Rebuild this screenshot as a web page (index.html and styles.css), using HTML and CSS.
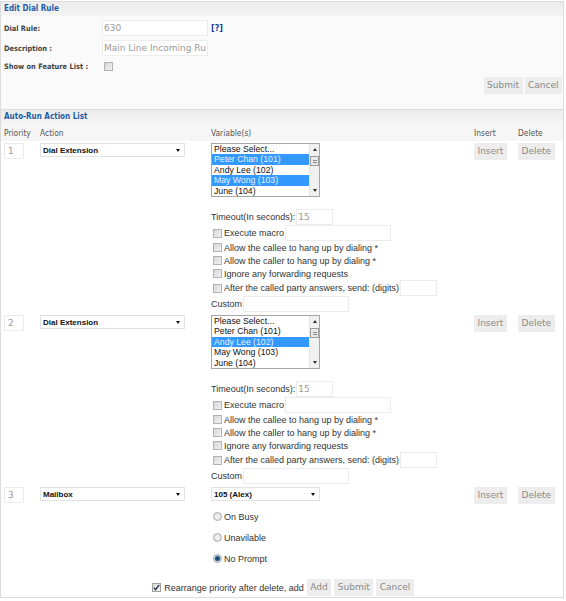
FILE: index.html
```html
<!DOCTYPE html>
<html>
<head>
<meta charset="utf-8">
<title>Edit Dial Rule</title>
<link rel="stylesheet" href="styles.css">
</head>
<body>
<div class="page">
  <section class="panel rule">
    <h2 class="ph">Edit Dial Rule</h2>
    <div class="rule-body">
      <div class="frow"><span class="lbl">Dial Rule:</span><input class="tin w106" type="text" value="630"><a class="help">[?]</a></div>
      <div class="frow"><span class="lbl">Description :</span><input class="tin w106" type="text" value="Main Line Incoming Ru"></div>
      <div class="frow short"><span class="lbl">Show on Feature List :</span><span class="cb"></span></div>
      <div class="btnbar"><button class="btn">Submit</button><button class="btn">Cancel</button></div>
    </div>
  </section>

  <section class="panel list">
    <h2 class="ph">Auto-Run Action List</h2>
    <div class="cols colhead"><span>Priority</span><span>Action</span><span>Variable(s)</span><span>Insert</span><span>Delete</span></div>

    <div class="cols arow first">
      <input class="tin pri" type="text" value="1">
      <div class="selbox w144"><span>Dial Extension</span><i class="arrow"></i></div>
      <div class="var">
        <div class="lb">
          <ul class="lb-items">
            <li>Please Select...</li>
            <li class="on">Peter Chan (101)</li>
            <li>Andy Lee (102)</li>
            <li class="on">May Wong (103)</li>
            <li>June (104)</li>
          </ul>
          <div class="sb"><span class="sb-up"><i></i></span><span class="sb-thumb"></span><span class="sb-fill"></span><span class="sb-dn"><i></i></span></div>
        </div>
        <div class="opts">
          <div class="oline tall">Timeout(In seconds):<input class="tin w37" type="text" value="15"></div>
          <div class="oline tall"><span class="cb"></span>Execute macro<input class="tin w106" type="text"></div>
          <div class="oline"><span class="cb"></span>Allow the callee to hang up by dialing *</div>
          <div class="oline"><span class="cb"></span>Allow the caller to hang up by dialing *</div>
          <div class="oline"><span class="cb"></span>Ignore any forwarding requests</div>
          <div class="oline tall"><span class="cb"></span>After the called party answers, send: (digits)<input class="tin w37" type="text"></div>
          <div class="oline tall">Custom<input class="tin w106" type="text"></div>
        </div>
      </div>
      <button class="btn">Insert</button>
      <button class="btn">Delete</button>
    </div>

    <div class="cols arow">
      <input class="tin pri" type="text" value="2">
      <div class="selbox w144"><span>Dial Extension</span><i class="arrow"></i></div>
      <div class="var">
        <div class="lb">
          <ul class="lb-items">
            <li>Please Select...</li>
            <li>Peter Chan (101)</li>
            <li class="on">Andy Lee (102)</li>
            <li>May Wong (103)</li>
            <li>June (104)</li>
          </ul>
          <div class="sb"><span class="sb-up"><i></i></span><span class="sb-thumb"></span><span class="sb-fill"></span><span class="sb-dn"><i></i></span></div>
        </div>
        <div class="opts">
          <div class="oline tall">Timeout(In seconds):<input class="tin w37" type="text" value="15"></div>
          <div class="oline tall"><span class="cb"></span>Execute macro<input class="tin w106" type="text"></div>
          <div class="oline"><span class="cb"></span>Allow the callee to hang up by dialing *</div>
          <div class="oline"><span class="cb"></span>Allow the caller to hang up by dialing *</div>
          <div class="oline"><span class="cb"></span>Ignore any forwarding requests</div>
          <div class="oline tall"><span class="cb"></span>After the called party answers, send: (digits)<input class="tin w37" type="text"></div>
          <div class="oline tall">Custom<input class="tin w106" type="text"></div>
        </div>
      </div>
      <button class="btn">Insert</button>
      <button class="btn">Delete</button>
    </div>

    <div class="cols arow">
      <input class="tin pri" type="text" value="3">
      <div class="selbox w144"><span>Mailbox</span><i class="arrow"></i></div>
      <div class="var">
        <div class="selbox w109"><span>105 (Alex)</span><i class="arrow"></i></div>
        <div class="radios">
          <div class="rline"><span class="rd"></span>On Busy</div>
          <div class="rline"><span class="rd"></span>Unavilable</div>
          <div class="rline"><span class="rd on"></span>No Prompt</div>
        </div>
      </div>
      <button class="btn">Insert</button>
      <button class="btn">Delete</button>
    </div>

    <div class="footbar">
      <span class="cb checked"><svg viewBox="0 0 9 9" width="9" height="9"><path d="M1.8 4.6 L3.6 6.6 L7.2 1.8" fill="none" stroke="#2a3550" stroke-width="1.4"/></svg></span>
      <span class="foottext">Rearrange priority after delete, add</span>
      <button class="btn">Add</button>
      <button class="btn">Submit</button>
      <button class="btn">Cancel</button>
    </div>
  </section>
</div>
</body>
</html>
```

FILE: styles.css
```css
* { box-sizing: border-box; }

body {
  margin: 0;
  background: #fff;
  font-family: "Liberation Sans", Arial, sans-serif;
  font-size: 9px;
  color: #333;
}

.page {
  width: 564px;
  padding-top: 1px;
}

.panel {
  border: 1px solid #dcdcdc;
}

.rule {
  background: #fafafa;
  border-bottom: none;
}

.list {
  background: #fff;
}

.ph {
  margin: 0;
  height: 14px;
  line-height: 14px;
  padding-left: 3px;
  font-family: "DejaVu Sans Condensed", "DejaVu Sans", sans-serif;
  font-stretch: condensed;
  font-weight: bold;
  font-size: 8px;
  color: #1d5ea8;
  background: linear-gradient(#ebebeb, #f5f5f5);
}

/* ---------- Edit Dial Rule ---------- */
.rule-body {
  padding: 4px 1px 15px 3px;
}

.frow {
  display: flex;
  align-items: center;
  height: 16px;
  margin-bottom: 4px;
}

.frow.short {
  height: 12px;
  margin-bottom: 5px;
}

.lbl {
  width: 98px;
  font-family: "DejaVu Sans Condensed", "DejaVu Sans", sans-serif;
  font-stretch: condensed;
  font-weight: bold;
  font-size: 7.4px;
  color: #444;
}

.tin {
  height: 16px;
  border: 1px solid #ececec;
  background: #fff;
  padding: 0 1px;
  margin: 0;
  font-family: "DejaVu Sans", Verdana, sans-serif;
  font-size: 9px;
  color: #999;
  outline: none;
}

.w106 { width: 106px; }
.w37 { width: 37px; }

.help {
  margin-left: 3px;
  font-family: "DejaVu Sans", sans-serif;
  font-weight: bold;
  font-size: 8px;
  color: #1a3a9a;
}

.cb {
  flex: none;
  display: inline-block;
  width: 9px;
  height: 9px;
  border: 1px solid #b3b3b3;
  background: linear-gradient(135deg, #d6d6d6, #f3f3f3);
  margin: 0 2px;
}

.cb.checked {
  padding: 0;
  border-color: #a0a0a0;
  background: linear-gradient(135deg, #dcdcdc, #f6f6f6);
}

.cb.checked svg {
  display: block;
  margin: -1px 0 0 -1px;
}

.btnbar {
  display: flex;
  justify-content: flex-end;
  gap: 2px;
}

.btn {
  height: 17px;
  padding: 0 3.5px;
  margin: 0;
  border: 0;
  background: #ededed;
  color: #8a8a8a;
  font-family: "DejaVu Sans", Verdana, sans-serif;
  font-size: 9px;
  line-height: 17px;
  cursor: pointer;
}

/* ---------- Action list ---------- */
.cols {
  display: grid;
  grid-template-columns: 36px 171px 263px 44px 1fr;
  padding-left: 3px;
}

.colhead {
  height: 17px;
  align-items: center;
  background: #f6f6f6;
  font-family: "DejaVu Sans Condensed", "DejaVu Sans", sans-serif;
  font-stretch: condensed;
  font-size: 8.4px;
  color: #555;
}

.arow {
  align-items: start;
  margin-top: 3px;
}

.arow.first {
  margin-top: 2px;
}

.arow > .btn {
  justify-self: start;
}

.pri {
  width: 20px;
  padding-left: 3px;
}

.selbox {
  display: flex;
  align-items: center;
  justify-content: space-between;
  height: 14px;
  border: 1px solid #e2e2e2;
  background: #fff;
  padding: 0 4px 0 2px;
  font-family: "Liberation Sans", Arial, sans-serif;
  font-weight: bold;
  font-size: 8px;
  color: #111;
}

.w144 { width: 145px; }
.w109 { width: 109px; }

.arrow {
  width: 0;
  height: 0;
  border-left: 2.5px solid transparent;
  border-right: 2.5px solid transparent;
  border-top: 3px solid #111;
}

.var {
  display: flex;
  flex-direction: column;
  align-items: flex-start;
}

/* listbox */
.lb {
  display: flex;
  width: 109px;
  height: 54px;
  border: 1px solid #a6a6a6;
  background: #fff;
  overflow: hidden;
}

.lb-items {
  flex: 1;
  list-style: none;
  margin: 0;
  padding: 0;
}

.lb-items li {
  height: 10.4px;
  line-height: 10.4px;
  padding-left: 2px;
  font-size: 8.7px;
  color: #111;
  white-space: nowrap;
}

.lb-items li.on {
  background: #3399ff;
  color: #e6f0ff;
}

.sb {
  width: 10px;
  display: flex;
  flex-direction: column;
  background: #f1f1f1;
  border-left: 1px solid #e4e4e4;
}

.sb-up, .sb-dn {
  height: 11px;
  display: flex;
  align-items: center;
  justify-content: center;
}

.sb-up i, .sb-dn i {
  width: 0;
  height: 0;
  border-left: 2px solid transparent;
  border-right: 2px solid transparent;
}

.sb-up i { border-bottom: 3px solid #333; }
.sb-dn i { border-top: 3px solid #333; }

.sb-thumb {
  height: 10px;
  margin-top: 1px;
  border: 1px solid #9c9c9c;
  background:
    repeating-linear-gradient(#eaeaea 0 1px, #888 1px 2px) center / 4px 5px no-repeat,
    #e9e9e9;
}

.sb-fill { flex: 1; }

/* options below listbox */
.opts {
  margin-top: 12px;
  display: flex;
  flex-direction: column;
}

.oline {
  display: flex;
  align-items: center;
  height: 13px;
  white-space: nowrap;
  color: #333;
}

.oline.tall { height: 16px; }

.oline .tin {
  margin-left: 1px;
}

/* radios */
.radios {
  margin-top: 5px;
  display: flex;
  flex-direction: column;
}

.rline {
  display: flex;
  align-items: center;
  height: 21px;
  color: #333;
}

.rd {
  width: 9px;
  height: 9px;
  border-radius: 50%;
  border: 1px solid #ababab;
  background: radial-gradient(circle, #f5f5f5, #dadada);
  margin: 0 2px;
}

.rd.on {
  background: radial-gradient(circle, #1c4f7e 0 2px, #8fb0c8 2.6px, #e8e8e8 3.5px);
}

/* footer */
.footbar {
  display: flex;
  align-items: center;
  justify-content: center;
  gap: 3px;
  margin-top: 10px;
  padding-bottom: 1px;
}

.foottext {
  margin-left: -2px;
  color: #333;
}
```
